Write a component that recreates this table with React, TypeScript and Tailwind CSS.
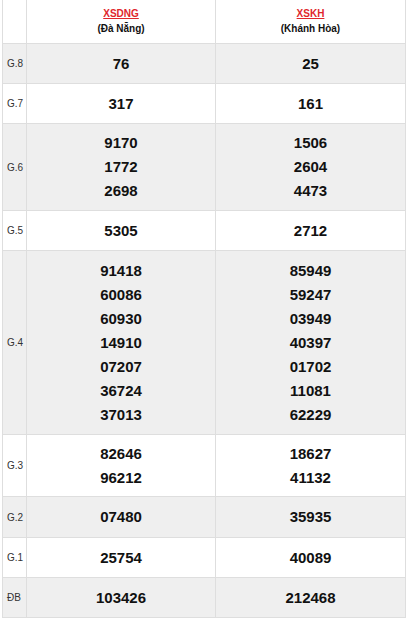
import React from "react";

type Row = { label: string; h: string; a: string[]; b: string[] };

// kết quả xổ số miền Trung: Đà Nẵng / Khánh Hòa
const ROWS: Row[] = [
  { label: "G.8", h: "h-[39px]", a: ["76"], b: ["25"] },
  { label: "G.7", h: "h-[39px]", a: ["317"], b: ["161"] },
  { label: "G.6", h: "h-[86px]", a: ["9170", "1772", "2698"], b: ["1506", "2604", "4473"] },
  { label: "G.5", h: "h-[39px]", a: ["5305"], b: ["2712"] },
  {
    label: "G.4",
    h: "h-[183px]",
    a: ["91418", "60086", "60930", "14910", "07207", "36724", "37013"],
    b: ["85949", "59247", "03949", "40397", "01702", "11081", "62229"],
  },
  { label: "G.3", h: "h-[61px]", a: ["82646", "96212"], b: ["18627", "41132"] },
  { label: "G.2", h: "h-[40px]", a: ["07480"], b: ["35935"] },
  { label: "G.1", h: "h-[39px]", a: ["25754"], b: ["40089"] },
  { label: "ĐB", h: "h-[39px]", a: ["103426"], b: ["212468"] },
];

function Nums({ list, bg, h }: { list: string[]; bg: string; h: string }) {
  return (
    <div className={`${bg} ${h} flex flex-col items-center justify-center`}>
      {list.map((n) => (
        <div key={n} className="leading-6 text-[15px] font-bold text-[#111]">
          {n}
        </div>
      ))}
    </div>
  );
}

export default function App() {
  return (
    <div className="w-[409px] h-[621px] bg-white" style={{ fontFamily: '"Liberation Sans", Arial, sans-serif' }}>
      <div className="ml-[2px] w-[404px] grid grid-cols-[23px_188px_189px] gap-px bg-[#dedede] px-px pb-px">
        <div className="bg-white h-[43px]" />
        <div className="bg-white h-[43px] flex flex-col items-center justify-center pb-[2px]">
          <span className="text-[10px] leading-[15px] font-bold text-[#e0262b] underline">XSDNG</span>
          <span className="text-[10px] leading-[15px] font-bold text-[#111]">(Đà Nẵng)</span>
        </div>
        <div className="bg-white h-[43px] flex flex-col items-center justify-center pb-[2px]">
          <span className="text-[10px] leading-[15px] font-bold text-[#e0262b] underline">XSKH</span>
          <span className="text-[10px] leading-[15px] font-bold text-[#111]">(Khánh Hòa)</span>
        </div>

        {ROWS.map((r, i) => {
          const bg = i % 2 === 0 ? "bg-[#efefef]" : "bg-white";
          return (
            <React.Fragment key={r.label}>
              <div className={`${bg} ${r.h} flex items-center pl-[4px] text-[10px] text-[#333]`}>{r.label}</div>
              <Nums list={r.a} bg={bg} h={r.h} />
              <Nums list={r.b} bg={bg} h={r.h} />
            </React.Fragment>
          );
        })}
      </div>
    </div>
  );
}
